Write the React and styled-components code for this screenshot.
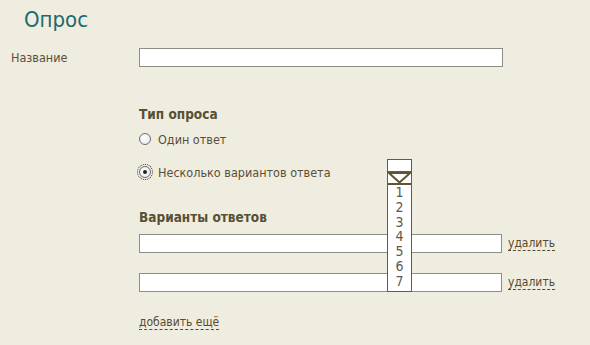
import React from 'react';
import styled, { createGlobalStyle } from 'styled-components';

const GlobalStyle = createGlobalStyle`
  html, body {
    margin: 0;
    padding: 0;
    background: #efede0;
  }
  body {
    font-family: "DejaVu Sans Condensed", "DejaVu Sans", sans-serif;
    font-stretch: condensed;
    color: #5b4f38;
  }
`;

const Page = styled.div`
  width: 590px;
  height: 345px;
  overflow: hidden;
  position: relative;
`;

const Title = styled.h1`
  margin: 0;
  padding: 6px 0 0 24px;
  height: 42px;
  box-sizing: border-box;
  font-size: 22px;
  font-weight: normal;
  color: #1d6a70;
  line-height: 28px;
`;

const FieldRow = styled.div`
  display: flex;
  align-items: center;
  height: 19px;
  margin-top: 6px;
`;

const Label = styled.label`
  width: 128px;
  padding-left: 11px;
  font-size: 12.5px;
`;

const TextInput = styled.input`
  box-sizing: border-box;
  width: ${(p) => p.$width}px;
  height: 19px;
  margin: 0;
  border: 1px solid #8e8d86;
  background: #fff;
  padding: 0 3px;
`;

const Section = styled.div`
  margin-left: 139px;
`;

const Heading = styled.h3`
  margin: ${(p) => p.$top}px 0 0;
  font-size: 13.5px;
  font-weight: bold;
  color: #585034;
  line-height: 16px;
`;

const RadioRow = styled.label`
  display: flex;
  align-items: center;
  gap: 7px;
  height: 16px;
  margin-top: ${(p) => p.$top}px;
  font-size: 12.5px;
`;

const Radio = styled.span`
  width: 12px;
  height: 12px;
  box-sizing: border-box;
  border-radius: 50%;
  border: 1px solid #6f6f6f;
  background: radial-gradient(circle at 40% 40%, #ffffff, #e4e4e4);
  display: flex;
  align-items: center;
  justify-content: center;
  ${(p) =>
    p.$focused &&
    `
    outline: 1px dotted #333;
    outline-offset: 1px;
  `}
  &::after {
    content: '';
    display: ${(p) => (p.$checked ? 'block' : 'none')};
    width: 4px;
    height: 4px;
    border-radius: 50%;
    background: #222;
  }
`;

const AnswerRow = styled.div`
  display: flex;
  align-items: center;
  gap: 6px;
  height: 19px;
  margin-top: ${(p) => p.$top}px;
`;

const DashedLink = styled.a`
  font-size: 12px;
  color: #5a4a2c;
  text-decoration: none;
  border-bottom: 1px dashed #5a4a2c;
  line-height: 13px;
  cursor: pointer;
`;

const AddLink = styled(DashedLink)`
  display: inline-block;
  margin-top: ${(p) => p.$top}px;
`;

const Dropdown = styled.div`
  position: absolute;
  left: 387px;
  top: 159px;
  width: 25px;
  height: 133px;
  box-sizing: border-box;
  border: 1px solid #6b5a3c;
  background: #fff;
  display: flex;
  flex-direction: column;
`;

const DropValue = styled.div`
  height: 11px;
  border-bottom: 1px solid #6b5a3c;
`;

const DropArrow = styled.div`
  height: 11px;
  border-bottom: 2px solid #5f5436;
  display: flex;
  justify-content: center;
`;

const Options = styled.ul`
  list-style: none;
  margin: 0;
  padding: 0;
`;

const Option = styled.li`
  font-size: 14px;
  line-height: 14.8px;
  text-align: center;
  color: #5d5a50;
`;

export default function App() {
  return (
    <Page>
      <GlobalStyle />
      <Title>Опрос</Title>
      <FieldRow>
        <Label>Название</Label>
        <TextInput $width={364} />
      </FieldRow>
      <Section>
        <Heading $top={39}>Тип опроса</Heading>
        <RadioRow $top={9}>
          <Radio />
          Один ответ
        </RadioRow>
        <RadioRow $top={17}>
          <Radio $checked $focused />
          Несколько вариантов ответа
        </RadioRow>
        <Heading $top={29}>Варианты ответов</Heading>
        <AnswerRow $top={9}>
          <TextInput $width={363} />
          <DashedLink>удалить</DashedLink>
        </AnswerRow>
        <AnswerRow $top={20}>
          <TextInput $width={363} />
          <DashedLink>удалить</DashedLink>
        </AnswerRow>
        <AddLink $top={24}>добавить ещё</AddLink>
      </Section>
      <Dropdown>
        <DropValue />
        <DropArrow>
          <svg width="23" height="11" viewBox="0 0 23 11">
            <path d="M1 1 H22 L11.5 10.5 Z" fill="#fff" stroke="#5f5436" strokeWidth="2" strokeLinejoin="miter" />
          </svg>
        </DropArrow>
        <Options>
          {[1, 2, 3, 4, 5, 6, 7].map((n) => (
            <Option key={n}>{n}</Option>
          ))}
        </Options>
      </Dropdown>
    </Page>
  );
}
